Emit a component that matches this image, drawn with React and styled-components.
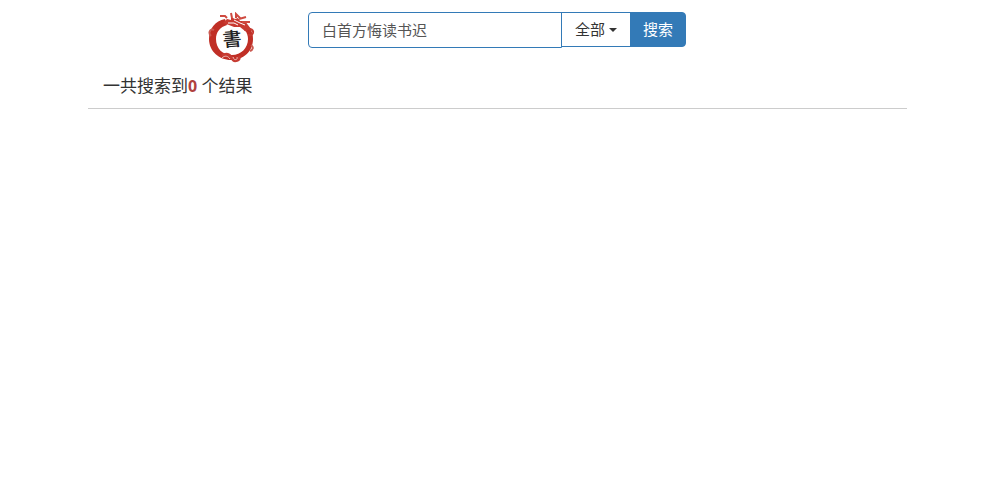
import React, { useState } from "react";
import styled, { createGlobalStyle } from "styled-components";

const GlobalStyle = createGlobalStyle`
  * { box-sizing: border-box; }
  body {
    margin: 0;
    background: #fff;
    color: #333;
    font-family: "Open Sans", "Noto Sans CJK SC", sans-serif;
    font-weight: 400;
    font-size: 15px;
    line-height: 20px;
  }
`;

const Page = styled.main`
  margin: 0 96px 0 88px;
`;

const SearchBar = styled.header`
  display: flex;
  align-items: flex-start;
  gap: 52px;
  padding: 12px 0 0 120px;
`;

const HomeLink = styled.a`
  display: block;
  flex: none;
  height: 52px;
`;

const SearchForm = styled.form`
  display: flex;
  align-items: flex-start;
  flex: 0 1 378px;
  min-width: 0;
`;

const SearchInput = styled.input`
  flex: 1;
  min-width: 0;
  height: 36px;
  padding: 5px 13px 7px;
  border: 1px solid #337ab7;
  border-radius: 4px 0 0 4px;
  background: #fff;
  color: #555;
  font: inherit;
  outline: 0;
`;

const FormButton = styled.button`
  display: flex;
  align-items: center;
  justify-content: center;
  gap: 4px;
  width: ${({ $primary }) => ($primary ? 56 : 70)}px;
  height: 35px;
  margin-left: -1px;
  padding: 0 0 1px;
  border: 1px solid #337ab7;
  border-radius: ${({ $primary }) => ($primary ? "0 4px 4px 0" : 0)};
  background: ${({ $primary }) => ($primary ? "#337ab7" : "#fff")};
  color: ${({ $primary }) => ($primary ? "#fff" : "#333")};
  font: inherit;
  cursor: pointer;
`;

const Caret = styled.span`
  margin-top: 2px;
  border-top: 4px solid currentColor;
  border-right: 4px solid transparent;
  border-left: 4px solid transparent;
`;

const Summary = styled.p`
  margin: 0;
  padding: 10px 15px;
  border-bottom: 1px solid #ccc;
  font-size: 17px;
  line-height: 24px;
`;

const Count = styled.strong`
  color: #b0413e;
  font-size: 16px;
  font-weight: 700;
`;

function Logo() {
  return (
    <svg width="48" height="52" viewBox="8 7 48 52" role="img" aria-label="書">
      <path d="M25 14C15 16 9 24 9 34C9 46 19 55 31 55C44 55 53 46 53 34C53 30 52 26 50 23L45 25C47 28 48 31 48 34C48 43 41 50 32 50C22 50 16 43 16 34C16 27 20 22 27 20Z" fill="#c02f26" />
      <path d="M23 18L27 14L31 15L31 12L35 14L38 13L40 16L45 16L48 20L51 24L45 26L40 22L34 22L29 20Z" fill="#c93a31" />
      <path d="M20 11L25 11L27 13M32 13L31 8M36 13L36 9L40 13M39 14L46 12M42 17L50 17" fill="none" stroke="#cf4a40" strokeWidth="2" />
      <path d="M28 18L34 18L38 20M34 15L40 18L45 20" fill="none" stroke="#fff" strokeWidth="1" />
      <path d="M45 26C47 22 54 24 53 28C52 31 49 31 49 29" fill="none" stroke="#c63b32" strokeWidth="2" />
      <path d="M14 25C10 23 8 28 11 31M51 40C54 42 53 45 50 46" fill="none" stroke="#cb5a51" strokeWidth="2" />
      <path d="M22 51C26 48 29 49 32 53C34 58 41 55 39 51" fill="none" stroke="#c63b32" strokeWidth="3" />
      <path d="M22 53C25 50 28 51 30 54M33 52C34 56 38 55 37 52" fill="none" stroke="#f1beb8" strokeWidth="1" />
      <text
        x="32"
        y="41"
        fill="#222"
        fontFamily='"Noto Sans CJK TC", sans-serif'
        fontSize="19"
        fontWeight="500"
        textAnchor="middle"
        transform="rotate(-5 32 34)"
      >
        書
      </text>
    </svg>
  );
}

export default function App() {
  const [query, setQuery] = useState("白首方悔读书迟");
  return (
    <>
      <GlobalStyle />
      <Page>
        <SearchBar>
          <HomeLink href="#">
            <Logo />
          </HomeLink>
          <SearchForm onSubmit={(event) => event.preventDefault()}>
            <SearchInput
              type="text"
              aria-label="搜索"
              value={query}
              onChange={(event) => setQuery(event.target.value)}
            />
            <FormButton type="button" aria-haspopup="true">
              全部
              <Caret />
            </FormButton>
            <FormButton type="submit" $primary>
              搜索
            </FormButton>
          </SearchForm>
        </SearchBar>
        <Summary>
          一共搜索到<Count>0</Count> 个结果
        </Summary>
      </Page>
    </>
  );
}
